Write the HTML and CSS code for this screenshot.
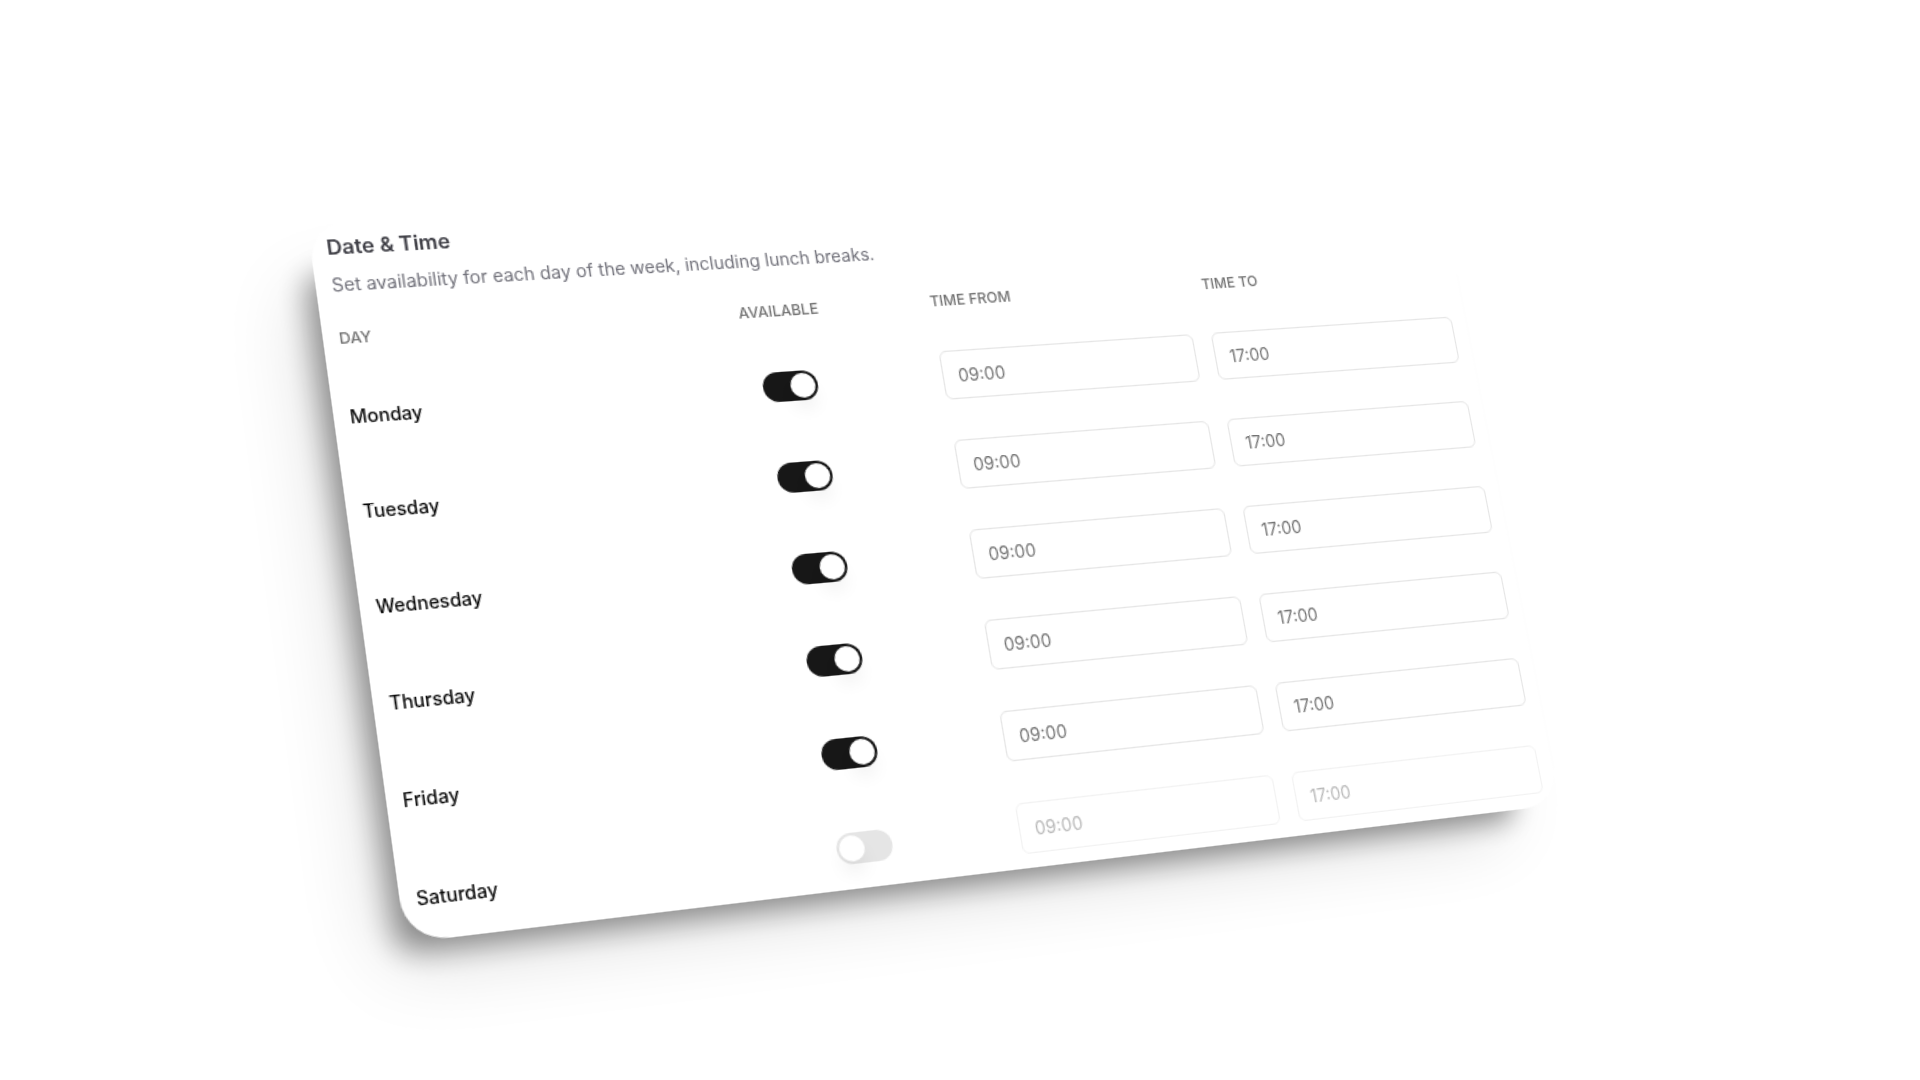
FILE: index.html
```html
<!DOCTYPE html>
<html lang="en">
<head>
<meta charset="utf-8">
<title>Date &amp; Time</title>
<link rel="stylesheet" href="styles.css">
</head>
<body>
<main class="stage">
  <section class="card">
    <header class="card-header">
      <h1 class="title">Date &amp; Time</h1>
      <p class="subtitle">Set availability for each day of the week, including lunch breaks.</p>
    </header>
    <table class="schedule">
      <thead>
        <tr>
          <th scope="col">Day</th>
          <th scope="col" class="center">Available</th>
          <th scope="col">Time from</th>
          <th scope="col">Time to</th>
        </tr>
      </thead>
      <tbody>
        <tr>
          <th scope="row">Monday</th>
          <td class="center"><input class="switch" type="checkbox" role="switch" aria-label="Monday available" checked></td>
          <td><input class="time" type="text" aria-label="Monday from" value="09:00"></td>
          <td><input class="time" type="text" aria-label="Monday to" value="17:00"></td>
        </tr>
        <tr>
          <th scope="row">Tuesday</th>
          <td class="center"><input class="switch" type="checkbox" role="switch" aria-label="Tuesday available" checked></td>
          <td><input class="time" type="text" aria-label="Tuesday from" value="09:00"></td>
          <td><input class="time" type="text" aria-label="Tuesday to" value="17:00"></td>
        </tr>
        <tr>
          <th scope="row">Wednesday</th>
          <td class="center"><input class="switch" type="checkbox" role="switch" aria-label="Wednesday available" checked></td>
          <td><input class="time" type="text" aria-label="Wednesday from" value="09:00"></td>
          <td><input class="time" type="text" aria-label="Wednesday to" value="17:00"></td>
        </tr>
        <tr>
          <th scope="row">Thursday</th>
          <td class="center"><input class="switch" type="checkbox" role="switch" aria-label="Thursday available" checked></td>
          <td><input class="time" type="text" aria-label="Thursday from" value="09:00"></td>
          <td><input class="time" type="text" aria-label="Thursday to" value="17:00"></td>
        </tr>
        <tr>
          <th scope="row">Friday</th>
          <td class="center"><input class="switch" type="checkbox" role="switch" aria-label="Friday available" checked></td>
          <td><input class="time" type="text" aria-label="Friday from" value="09:00"></td>
          <td><input class="time" type="text" aria-label="Friday to" value="17:00"></td>
        </tr>
        <tr>
          <th scope="row">Saturday</th>
          <td class="center"><input class="switch" type="checkbox" role="switch" aria-label="Saturday available"></td>
          <td><input class="time" type="text" aria-label="Saturday from" value="09:00" disabled></td>
          <td><input class="time" type="text" aria-label="Saturday to" value="17:00" disabled></td>
        </tr>
      </tbody>
    </table>
  </section>
</main>
</body>
</html>
```
FILE: styles.css
```css
*,
*::before {
  box-sizing: border-box;
}

body {
  margin: 0;
  background: #fff;
  color: #0a0a0a;
  font-family: Inter, "Liberation Sans", sans-serif;
  font-size: 14px;
  line-height: 20px;
}

.stage {
  display: flex;
  align-items: center;
  justify-content: center;
  min-height: 100vh;
  overflow: hidden;
}

/* The card leans back in perspective, hinged on its top left corner. */
.card {
  width: 100%;
  max-width: 936px;
  padding: 8px 4px 0;
  border-radius: 32px;
  background: #fff;
  box-shadow:
    -24px 24px 22px -17px rgb(0 0 0 / 42%),
    -32px 34px 60px -22px rgb(0 0 0 / 16%);
  transform-origin: 0 0;
  transform: matrix3d(
    1.32245, -0.07522, 0, 0.00012507,
    0.1853, 1.26739, 0, -0.00006534,
    0, 0, 1, 0,
    -185.1, -43.15, 0, 1
  );
  will-change: transform;
}

.card-header {
  display: grid;
  gap: 8px;
  padding: 0 8px 8px;
}

.title {
  margin: 0;
  color: #3f3f46;
  font-size: 16px;
  font-weight: 600;
  line-height: 24px;
}

.subtitle {
  margin: 0;
  color: #71717a;
}

.schedule {
  width: 100%;
  margin-bottom: -6px;
  border-collapse: collapse;
  table-layout: fixed;
}

.schedule th {
  padding: 0 8px;
  text-align: left;
  font-weight: 500;
}

.schedule thead th {
  height: 48px;
  color: #737373;
  font-size: 12px;
  line-height: 16px;
  text-transform: uppercase;
}

.schedule tr {
  border-bottom: 1px solid transparent;
}

.schedule td {
  padding: 16px 8px;
}

.schedule .center {
  text-align: center;
}

.switch {
  appearance: none;
  display: block;
  width: 44px;
  height: 24px;
  margin: 0 auto;
  padding: 2px;
  border-radius: 12px;
  background: #e5e5e5;
}

.switch::before {
  content: "";
  display: block;
  width: 20px;
  height: 20px;
  border-radius: 50%;
  background: #fff;
  box-shadow: 0 10px 15px -3px rgb(0 0 0 / 10%);
}

.switch:checked {
  background: #171717;
}

.switch:checked::before {
  margin-left: 20px;
}

.time {
  display: block;
  width: 100%;
  height: 40px;
  padding: 10px 12px 8px;
  border: 1px solid #e5e5e5;
  border-radius: 6px;
  background: #fff;
  color: #737373;
  font: inherit;
}

.time:disabled {
  opacity: 0.5;
}
```
